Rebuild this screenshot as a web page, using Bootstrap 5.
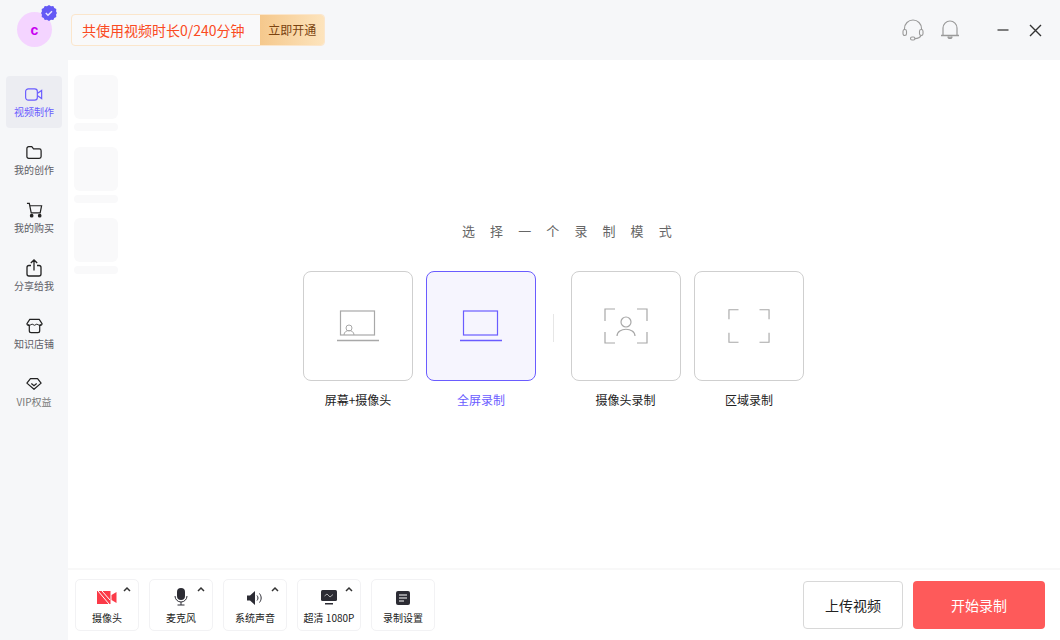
<!DOCTYPE html>
<html lang="zh-CN"><head><meta charset="utf-8"><title>录制</title>
<link href="https://cdn.jsdelivr.net/npm/bootstrap@5.3.0/dist/css/bootstrap.min.css" rel="stylesheet">
<style>
html,body{height:640px;overflow:hidden;margin:0}
body{width:1060px;background:#f6f7f9;font-family:"Noto Sans CJK SC","Liberation Sans",sans-serif;color:#222}
.topbar{height:60px;padding-left:17px}
.ava{width:35px;height:35px;margin-right:19px;background:#f4d4ff;color:#c800f0;font:700 14px "Liberation Sans",sans-serif}
.ava-wrap{margin-top:-1px}
.verified{top:-7px;left:24px}
.quota{width:254px;height:32px;border:1px solid #fbe6cc;border-radius:4px;overflow:hidden;margin-top:-1px;font-size:14px;color:#fa4a22;background:#f9f9fa}
.quota-t{width:189px;padding-left:10px;line-height:30px;white-space:nowrap}
.quota-b{width:64px;background:linear-gradient(90deg,#f5c88c,#fde4bd);color:#7a4310;font-size:12px;line-height:30px;text-align:center}
.topright{gap:0;padding-right:18px}
.ti{display:block}
.ti-head{margin-right:16px}
.ti-bell{margin-right:37px}
.ti-min{margin-right:20px}
.bodyrow{height:580px}
.side{width:68px;padding:16px 6px 0;flex:none}
.sitem{height:52px;margin-bottom:6px;font-size:10px;color:#5d5d66;border-radius:4px;line-height:14px;padding-top:8px}
.sitem-ic{height:20px;margin-bottom:1px}
.sitem svg{display:block;flex:none}
.sitem.on{background:#ecedf2;color:#6a5cff}
.sitem-vip{color:#777}
.mainp{background:#fff;min-width:0}
.workarea{height:508px}
.thumbs{width:44px;margin:15px 0 0 6px;flex:none}
.thumb1{height:44px;background:#f9f9fa;border-radius:6px}
.thumb2{height:8px;background:#f9f9fa;border-radius:4px;margin:4px 0 15.5px}
.center{padding-left:185px;padding-top:161px}
.headline{font-size:13px;letter-spacing:15.1px;color:#666;line-height:20px;margin-left:159px;white-space:nowrap}
.modes{margin-top:30px}
.mode{width:110px;margin-right:13px}
.mode .box{height:110px;border:1px solid #cfcfcf;border-radius:8px}
.mode.on .box{border-color:#6a5cff;background:#f6f5fe}
.mode span{display:block;font-size:12px;line-height:17px;margin-top:10px;text-align:center;color:#222;white-space:nowrap}
.mode.on span{color:#6a5cff}
.mode .lbl-cam{margin-left:-1px}
.vsep{width:1px;height:28px;background:#e6e6e6;margin:43px 17px 0 4px}
.bottom{height:72px;border-top:2px solid #f8f8f8;padding-left:7px;padding-right:15px}
.tool{width:64px;height:52px;border:1px solid #f2f2f4;border-radius:5px;margin-right:10px;font-size:10px;line-height:14px;color:#222;white-space:nowrap;padding-top:9px}
.caret{top:6px;right:7px}
.tool svg.main{display:block;flex:none}
.tl{position:absolute;top:31px;left:0;right:0;text-align:center}
.ic-cam{margin-top:1px}
.ic-mic{margin-top:-1px}
.ic-snd{margin-top:2px}
.ic-scr{margin-top:1px}
.ic-set{margin-top:2px}
.bt{height:48px;font-size:14px;border-radius:4px}
.bt-up{width:100px;border:1px solid #d8d8d8;background:#fff;color:#222}
.bt-go{width:132px;border:0;background:#fe5a5a;color:#fff;margin-left:10px}
</style></head><body>
<div class="topbar d-flex align-items-center">
  <div class="ava-wrap position-relative">
    <div class="ava rounded-circle d-flex align-items-center justify-content-center">c</div>
    <svg class="verified position-absolute" width="16" height="16" viewBox="0 0 16 16"><path d="M8 0l2 1.200 2.300-.2 1 2 2 1-.2 2.400L16 8l-.9 1.600.2 2.400-2 1-1 2-2.300-.2L8 16l-2-1.200-2.300.2-1-2-2-1 .2-2.400L0 8l.9-1.600-.2-2.400 2-1 1-2L6 1.200z" fill="#6459f5"/><path d="M4.800 8l2.200 2.200 4-4" fill="none" stroke="#e8e6ff" stroke-width="1.500"/></svg>
  </div>
  <div class="quota d-flex"><div class="quota-t">共使用视频时长0/240分钟</div><div class="quota-b">立即开通</div></div>
  <div class="topright ms-auto d-flex align-items-center">
    <svg class="ti ti-head" width="22" height="22" viewBox="0 0 22 22" fill="none" stroke="#9a9a9a" stroke-width="1.100"><path d="M2.500 11V9.500a8.500 8.500 0 0 1 17 0V11"/><rect x="1" y="10.500" width="3.500" height="6" rx="1.700"/><rect x="17.500" y="10.500" width="3.500" height="6" rx="1.700"/><path d="M19 16.500c-1 2.500-4 3-6.500 3.200"/><rect x="8.500" y="18" width="4.500" height="3" rx="1.500"/></svg>
    <svg class="ti ti-bell" width="20" height="22" viewBox="0 0 20 22" fill="none" stroke="#9a9a9a" stroke-width="1.200"><path d="M3 16.500V9a7 7 0 0 1 14 0v7.500"/><path d="M1 16.500h18" stroke-width="1.500"/><path d="M8 17.500a2 2 0 0 0 4 0" fill="#aaa"/></svg>
    <svg class="ti ti-min" width="12" height="12" viewBox="0 0 12 12"><path d="M.5 6h11" stroke="#555" stroke-width="1.500"/></svg>
    <svg class="ti" width="13" height="13" viewBox="0 0 13 13"><path d="M1 1l11 11M12 1L1 12" stroke="#333" stroke-width="1.400"/></svg>
  </div>
</div>
<div class="bodyrow d-flex">
  <div class="side">
    <div class="sitem on d-flex flex-column align-items-center"><div class="sitem-ic d-flex align-items-center"><svg width="18" height="13" viewBox="0 0 20 14" fill="none" stroke="#6a5cff" stroke-width="1.300"><rect x=".7" y=".7" width="13" height="12.600" rx="3"/><path d="M14 5.500l4.500-3v9l-4.500-3"/></svg></div><div>视频制作</div></div>
    <div class="sitem d-flex flex-column align-items-center"><div class="sitem-ic d-flex align-items-center"><svg width="16" height="15" viewBox="0 0 18 16" fill="none" stroke="#222" stroke-width="1.400"><path d="M1 3.500A2 2 0 0 1 3 1.500h3.500l2 2.500H15a2 2 0 0 1 2 2v6.500a2 2 0 0 1-2 2H3a2 2 0 0 1-2-2z"/></svg></div><div>我的创作</div></div>
    <div class="sitem d-flex flex-column align-items-center"><div class="sitem-ic d-flex align-items-center"><svg width="17" height="16" viewBox="0 0 18 16" fill="none" stroke="#222" stroke-width="1.300"><path d="M1 1h2.500l2 10h9.500l1.500-7.500H4"/><circle cx="6" cy="14" r="1.300" fill="#222"/><circle cx="14.500" cy="14" r="1.300" fill="#222"/></svg></div><div>我的购买</div></div>
    <div class="sitem d-flex flex-column align-items-center"><div class="sitem-ic d-flex align-items-center"><svg width="16" height="18" viewBox="0 0 16 18" fill="none" stroke="#222" stroke-width="1.300"><path d="M5 6.500H3a2 2 0 0 0-2 2V15a2 2 0 0 0 2 2h10a2 2 0 0 0 2-2V8.500a2 2 0 0 0-2-2h-2M8 11.500V1M4.800 4L8 1l3.200 3"/></svg></div><div>分享给我</div></div>
    <div class="sitem d-flex flex-column align-items-center"><div class="sitem-ic d-flex align-items-center"><svg width="17" height="16" viewBox="0 0 18 16" fill="none" stroke="#222" stroke-width="1.300"><path d="M4 1h10l3 4.500c0 1.800-2 2.200-2.500 2V13a2 2 0 0 1-2 2h-7a2 2 0 0 1-2-2V7.500C3 7.700 1 7.300 1 5.500z"/><path d="M1.500 6q2.500 2.500 5 0q2.500 2.500 5 0q2.500 2.500 5 0" stroke-width="1"/></svg></div><div>知识店铺</div></div>
    <div class="sitem d-flex flex-column align-items-center"><div class="sitem-ic d-flex align-items-center"><svg width="16" height="14" viewBox="0 0 18 14" fill="none" stroke="#222" stroke-width="1.400"><path d="M5 1h8l4 5-8 7-8-7z" stroke-linejoin="round"/><path d="M6 6.500l3 2.500 3-2.500"/></svg></div><div class="sitem-vip">VIP权益</div></div>
  </div>
  <div class="mainp flex-grow-1 d-flex flex-column">
    <div class="workarea d-flex">
      <div class="thumbs">
        <div class="thumb1"></div><div class="thumb2"></div>
        <div class="thumb1"></div><div class="thumb2"></div>
        <div class="thumb1"></div><div class="thumb2"></div>
      </div>
      <div class="center">
        <div class="headline">选择一个录制模式</div>
        <div class="modes d-flex">
          <div class="mode"><div class="box d-flex align-items-center justify-content-center">
            <svg width="42" height="32" viewBox="0 0 42 32" fill="none" stroke="#a8a8a8" stroke-width="1"><rect x="3.500" y="1" width="34" height="24" stroke-width="1.200"/><path d="M0 30.500h42" stroke-width="1.500"/><circle cx="12" cy="18" r="3"/><path d="M7 25c0-6 10-6 10 0"/></svg></div><span>屏幕+摄像头</span></div>
          <div class="mode on"><div class="box d-flex align-items-center justify-content-center">
            <svg width="42" height="32" viewBox="0 0 42 32" fill="none" stroke="#6a5cff"><rect x="3.500" y="1" width="34" height="24" stroke-width="1.200"/><path d="M0 30.500h42" stroke-width="1.500"/></svg></div><span>全屏录制</span></div>
          <div class="vsep"></div>
          <div class="mode"><div class="box d-flex align-items-center justify-content-center">
            <svg width="44" height="36" viewBox="0 0 44 36" fill="none" stroke="#a8a8a8" stroke-width="1.200"><path d="M11 1H1v12M33 1h10v12M1 24v11h10M43 24v11H33"/><circle cx="22" cy="14" r="5"/><path d="M13 28c0-9 18-9 18 0"/></svg></div><span class="lbl-cam">摄像头录制</span></div>
          <div class="mode"><div class="box d-flex align-items-center justify-content-center">
            <svg width="42" height="36" viewBox="0 0 44 36" fill="none" stroke="#a8a8a8" stroke-width="1.200"><path d="M11 1H1v10M33 1h10v10M1 25v10h10M43 25v10H33"/></svg></div><span>区域录制</span></div>
        </div>
      </div>
    </div>
    <div class="bottom d-flex align-items-center">
      <div class="tool position-relative d-flex flex-column align-items-center"><svg class="main ic-cam" width="20" height="15" viewBox="0 0 20 15"><path d="M0 1h13.500v13H0zM14.500 5l5-3v11l-5-3z" fill="#fb3a48"/><path d="M1 1l11 13M5 1l8 9" stroke="#fff" stroke-width="1"/></svg><div class="tl">摄像头</div><svg class="caret position-absolute" width="8" height="6" viewBox="0 0 8 6"><path d="M1 5l3-3 3 3" fill="none" stroke="#333" stroke-width="1.500"/></svg></div>
      <div class="tool position-relative d-flex flex-column align-items-center"><svg class="main ic-mic" width="14" height="18" viewBox="0 0 14 18"><rect x="3" y="0" width="8" height="12" rx="4" fill="#2c2c34"/><path d="M1 8a6 6 0 0 0 12 0M7 14v3M3.500 17h7" fill="none" stroke="#2c2c34"/></svg><div class="tl">麦克风</div><svg class="caret position-absolute" width="8" height="6" viewBox="0 0 8 6"><path d="M1 5l3-3 3 3" fill="none" stroke="#333" stroke-width="1.500"/></svg></div>
      <div class="tool position-relative d-flex flex-column align-items-center"><svg class="main ic-snd" width="16" height="14" viewBox="0 0 16 14"><path d="M0 4.500h3L8 0v14L3 9.500H0z" fill="#2c2c34"/><path d="M10 4.500c1.300 1.500 1.300 3.500 0 5M12.500 2.500c2.200 3 2.200 6 0 9" fill="none" stroke="#2c2c34"/></svg><div class="tl">系统声音</div><svg class="caret position-absolute" width="8" height="6" viewBox="0 0 8 6"><path d="M1 5l3-3 3 3" fill="none" stroke="#333" stroke-width="1.500"/></svg></div>
      <div class="tool position-relative d-flex flex-column align-items-center"><svg class="main ic-scr" width="16" height="15" viewBox="0 0 16 15"><rect width="16" height="11" rx="1.500" fill="#2c2c34"/><path d="M3.500 6l2.500-2 3 3 3-2.500" fill="none" stroke="#ccc" stroke-width=".8"/><path d="M4 13h8v1.500H4z" fill="#2c2c34"/></svg><div class="tl">超清 1080P</div><svg class="caret position-absolute" width="8" height="6" viewBox="0 0 8 6"><path d="M1 5l3-3 3 3" fill="none" stroke="#333" stroke-width="1.500"/></svg></div>
      <div class="tool position-relative d-flex flex-column align-items-center"><svg class="main ic-set" width="14" height="14" viewBox="0 0 14 14"><rect width="14" height="14" rx="2" fill="#2c2c34"/><path d="M3 4h8M3 7h8M3 10h5" stroke="#fff" stroke-width="1.200"/></svg><div class="tl">录制设置</div></div>
      <button class="btn bt bt-up ms-auto p-0">上传视频</button>
      <button class="btn bt bt-go p-0">开始录制</button>
    </div>
  </div>
</div>
<script src="https://cdn.jsdelivr.net/npm/bootstrap@5.3.0/dist/js/bootstrap.bundle.min.js"></script>
</body></html>
